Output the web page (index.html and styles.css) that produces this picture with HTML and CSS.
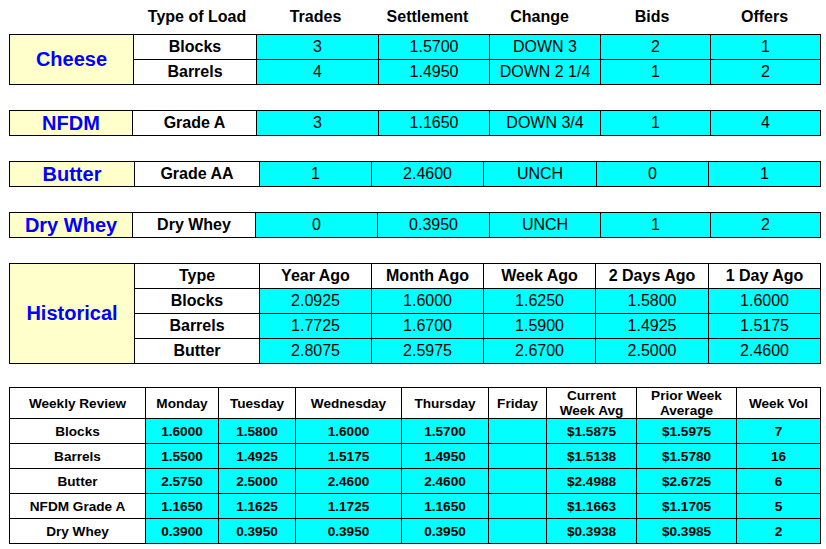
FILE: index.html
```html
<!DOCTYPE html>
<html>
<head>
<meta charset="utf-8">
<link rel="stylesheet" href="styles.css">
</head>
<body>
<div class="page">
  <div class="top-head cols-hist">
    <span></span><span>Type of Load</span><span>Trades</span><span>Settlement</span><span>Change</span><span>Bids</span><span>Offers</span>
  </div>

  <div class="tbl cols-cheese">
    <div class="c title span2">Cheese</div>
    <div class="c lab">Blocks</div><div class="c val">3</div><div class="c val">1.5700</div><div class="c val">DOWN 3</div><div class="c val">2</div><div class="c val">1</div>
    <div class="c lab">Barrels</div><div class="c val">4</div><div class="c val">1.4950</div><div class="c val">DOWN 2 1/4</div><div class="c val">1</div><div class="c val">2</div>
  </div>

  <div class="tbl cols-nfdm">
    <div class="c title">NFDM</div>
    <div class="c lab">Grade A</div><div class="c val">3</div><div class="c val">1.1650</div><div class="c val">DOWN 3/4</div><div class="c val">1</div><div class="c val">4</div>
  </div>

  <div class="tbl cols-butter">
    <div class="c title">Butter</div>
    <div class="c lab">Grade AA</div><div class="c val">1</div><div class="c val">2.4600</div><div class="c val">UNCH</div><div class="c val">0</div><div class="c val">1</div>
  </div>

  <div class="tbl cols-whey">
    <div class="c title">Dry Whey</div>
    <div class="c lab">Dry Whey</div><div class="c val">0</div><div class="c val">0.3950</div><div class="c val">UNCH</div><div class="c val">1</div><div class="c val">2</div>
  </div>

  <div class="tbl cols-hist">
    <div class="c title span4">Historical</div>
    <div class="c lab">Type</div><div class="c lab">Year Ago</div><div class="c lab">Month Ago</div><div class="c lab">Week Ago</div><div class="c lab">2 Days Ago</div><div class="c lab">1 Day Ago</div>
    <div class="c lab">Blocks</div><div class="c val">2.0925</div><div class="c val">1.6000</div><div class="c val">1.6250</div><div class="c val">1.5800</div><div class="c val">1.6000</div>
    <div class="c lab">Barrels</div><div class="c val">1.7725</div><div class="c val">1.6700</div><div class="c val">1.5900</div><div class="c val">1.4925</div><div class="c val">1.5175</div>
    <div class="c lab">Butter</div><div class="c val">2.8075</div><div class="c val">2.5975</div><div class="c val">2.6700</div><div class="c val">2.5000</div><div class="c val">2.4600</div>
  </div>

  <div class="tbl weekly">
    <div class="c wh">Weekly Review</div><div class="c wh">Monday</div><div class="c wh">Tuesday</div><div class="c wh">Wednesday</div><div class="c wh">Thursday</div><div class="c wh">Friday</div><div class="c wh">Current<br>Week Avg</div><div class="c wh">Prior Week<br>Average</div><div class="c wh">Week Vol</div>

    <div class="c wh">Blocks</div><div class="c wv">1.6000</div><div class="c wv">1.5800</div><div class="c wv">1.6000</div><div class="c wv">1.5700</div><div class="c wv"></div><div class="c wv">$1.5875</div><div class="c wv">$1.5975</div><div class="c wv">7</div>

    <div class="c wh">Barrels</div><div class="c wv">1.5500</div><div class="c wv">1.4925</div><div class="c wv">1.5175</div><div class="c wv">1.4950</div><div class="c wv"></div><div class="c wv">$1.5138</div><div class="c wv">$1.5780</div><div class="c wv">16</div>

    <div class="c wh">Butter</div><div class="c wv">2.5750</div><div class="c wv">2.5000</div><div class="c wv">2.4600</div><div class="c wv">2.4600</div><div class="c wv"></div><div class="c wv">$2.4988</div><div class="c wv">$2.6725</div><div class="c wv">6</div>

    <div class="c wh">NFDM Grade A</div><div class="c wv">1.1650</div><div class="c wv">1.1625</div><div class="c wv">1.1725</div><div class="c wv">1.1650</div><div class="c wv"></div><div class="c wv">$1.1663</div><div class="c wv">$1.1705</div><div class="c wv">5</div>

    <div class="c wh">Dry Whey</div><div class="c wv">0.3900</div><div class="c wv">0.3950</div><div class="c wv">0.3950</div><div class="c wv">0.3950</div><div class="c wv"></div><div class="c wv">$0.3938</div><div class="c wv">$0.3985</div><div class="c wv">2</div>
  </div>
</div>
</body>
</html>
```

FILE: styles.css
```css
html, body {
  margin: 0;
  padding: 0;
  background: #ffffff;
}

body {
  font-family: "Liberation Sans", Arial, sans-serif;
  color: #000000;
}

.page {
  display: flex;
  flex-direction: column;
  width: 812px;
  padding: 5px 0 0 9px;
}

.top-head {
  display: grid;
  column-gap: 1px;
  padding: 0 1px;
  height: 24px;
  line-height: 24px;
  margin-bottom: 5px;
  font-size: 16px;
  font-weight: bold;
  text-align: center;
}

.tbl {
  display: grid;
  gap: 1px;
  background: #000000;
  border: 1px solid #000000;
  grid-auto-rows: 24px;
  font-size: 16px;
}

.tbl + .tbl {
  margin-top: 25px;
}

.cols-cheese { grid-template-columns: 123px 122px 121px 110px 110px 109px 109px; }
.cols-nfdm   { grid-template-columns: 122px 123px 121px 110px 110px 109px 109px; }
.cols-butter { grid-template-columns: 124px 124px 111px 111px 112px 111px 111px; }
.cols-whey   { grid-template-columns: 122px 122px 121px 111px 110px 109px 109px; }
.cols-hist   { grid-template-columns: 124px 124px 111px 111px 111px 112px 111px; }

.c {
  display: flex;
  align-items: center;
  justify-content: center;
  text-align: center;
  overflow: hidden;
  white-space: nowrap;
}

.title {
  background: #ffffcc;
  color: #0000ff;
  font-size: 20px;
  font-weight: bold;
}

.span2 { grid-row: span 2; }
.span4 { grid-row: span 4; }

.lab {
  background: #ffffff;
  font-weight: bold;
}

.val {
  background: #00ffff;
}

.tbl.weekly {
  margin-top: 23px;
  grid-template-columns: 135px 72px 76px 105px 86px 57px 89px 99px 83px;
  grid-template-rows: 30px;
  grid-auto-rows: 24px;
  font-size: 13.6px;
  font-weight: bold;
  line-height: 15px;
}

.wh {
  background: #ffffff;
}

.wv {
  background: #00ffff;
}
```
